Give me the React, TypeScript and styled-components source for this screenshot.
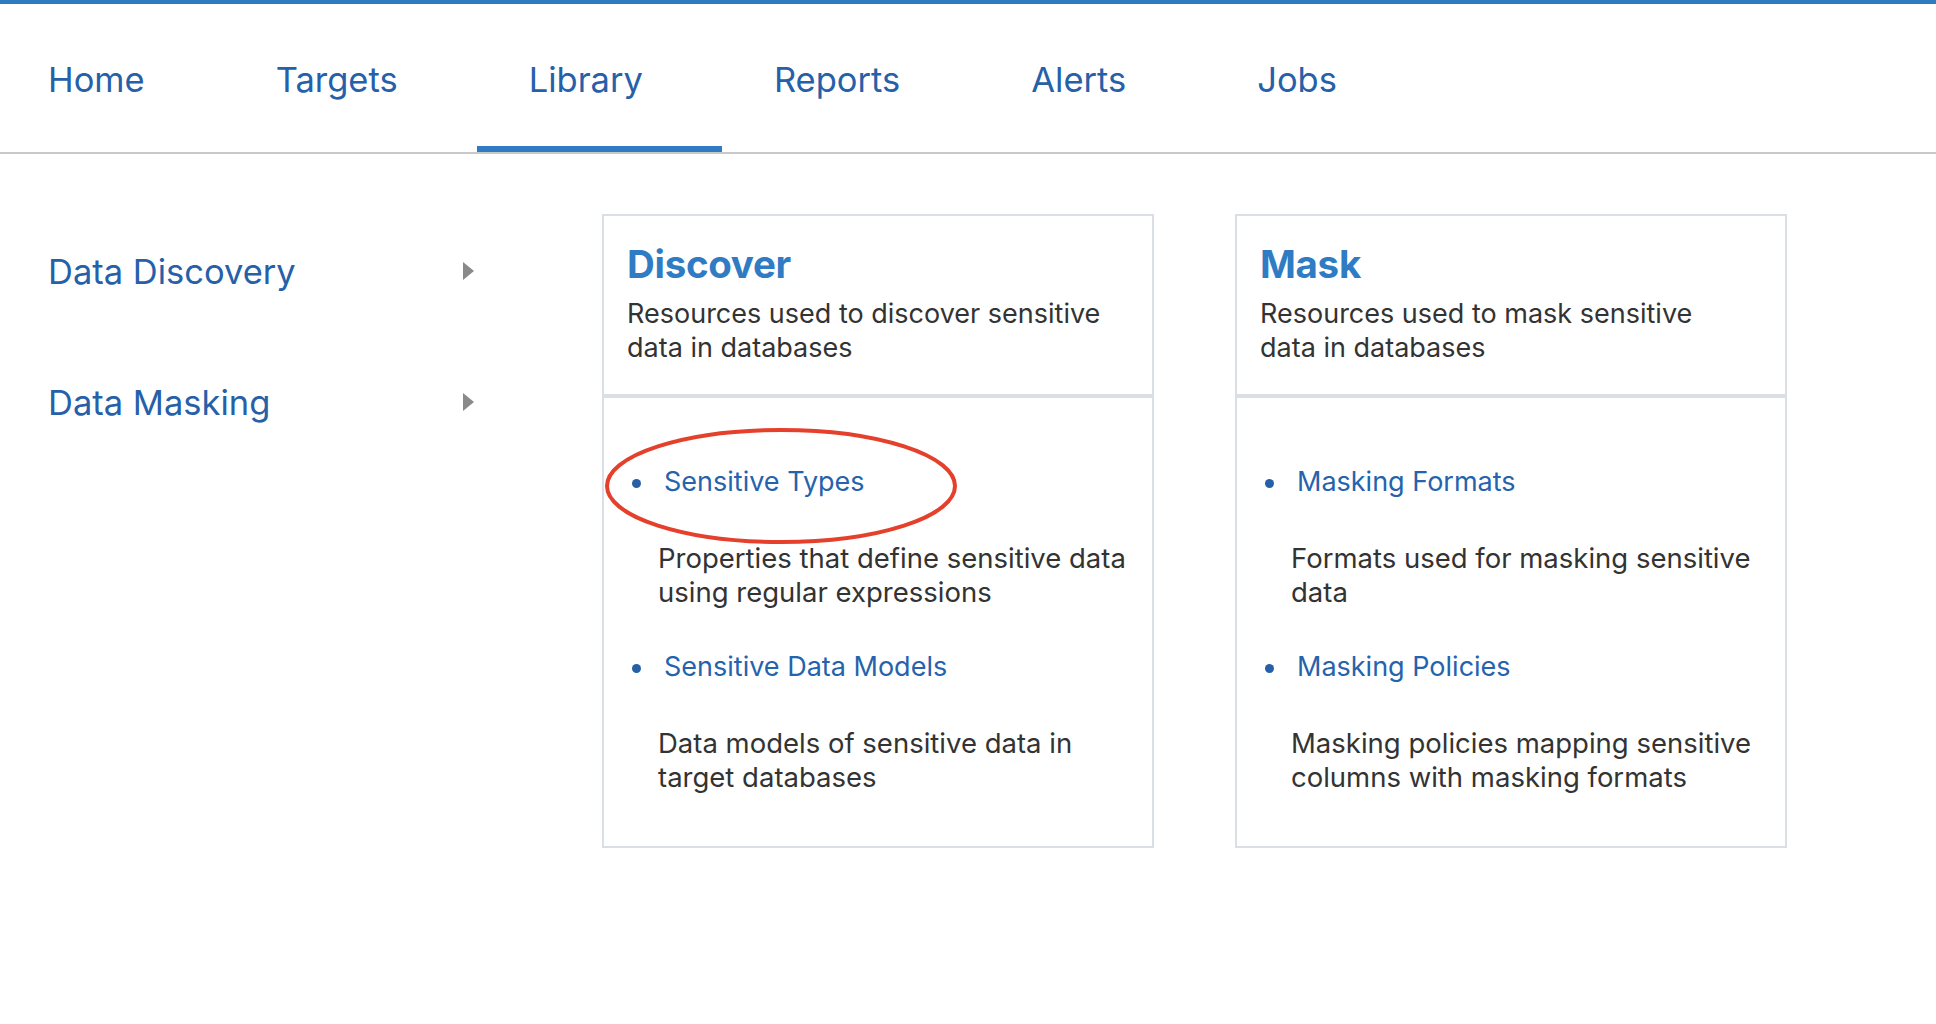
import React from "react";
import styled, { createGlobalStyle } from "styled-components";

const GlobalStyle = createGlobalStyle`
  html, body {
    margin: 0;
    padding: 0;
    background: #ffffff;
  }
  body {
    font-family: Inter, "Liberation Sans", Arial, sans-serif;
    color: #333333;
  }
`;

const Page = styled.div`
  width: 1936px;
  min-height: 1024px;
  background: #ffffff;
  overflow: hidden;
`;

const TopStrip = styled.div`
  height: 4px;
  background: #2f7bc0;
`;

const Nav = styled.nav`
  display: flex;
  height: 148px;
  margin-left: -4px;
  border-bottom: 2px solid #c8c8c8;
`;

const Tab = styled.a<{ $active?: boolean }>`
  display: flex;
  align-items: center;
  box-sizing: border-box;
  padding: 9px 79px 0 52px;
  font-size: 34.5px;
  font-weight: 400;
  color: #2660a9;
  text-decoration: none;
  border-bottom: 6px solid ${(p) => (p.$active ? "#2f7bc4" : "transparent")};
  cursor: pointer;
`;

const Main = styled.div`
  display: flex;
  align-items: flex-start;
`;

const Sidebar = styled.aside`
  display: flex;
  flex-direction: column;
  gap: 87px;
  box-sizing: border-box;
  width: 602px;
  padding: 95px 0 0 48px;
`;

const SideItem = styled.div`
  display: flex;
  align-items: center;
  justify-content: space-between;
  width: 426px;
  height: 44px;
  font-size: 34.5px;
  color: #2660a9;
  cursor: pointer;
`;

const Caret = styled.span`
  width: 0;
  height: 0;
  border-top: 9px solid transparent;
  border-bottom: 9px solid transparent;
  border-left: 11px solid #8a8a8a;
`;

const Cards = styled.div`
  display: flex;
  gap: 81px;
  padding-top: 60px;
`;

const Card = styled.section`
  position: relative;
  width: 552px;
  box-sizing: border-box;
  display: flex;
  flex-direction: column;
`;

const CardHeader = styled.header`
  border: 2px solid #d9dfe5;
  padding: 25px 40px 29px 23px;
`;

const CardTitle = styled.h2`
  margin: 0;
  font-size: 38.5px;
  line-height: 46px;
  font-weight: 700;
  color: #2f7cc4;
  letter-spacing: -0.3px;
`;

const CardDesc = styled.p`
  margin: 10px 0 0;
  font-size: 27px;
  line-height: 34px;
  color: #333333;
`;

const CardBody = styled.div`
  border: 2px solid #d9dfe5;
  padding: 67px 20px 52px 28px;
  display: flex;
  flex-direction: column;
`;

const Entry = styled.div<{ $first?: boolean }>`
  margin-top: ${(p) => (p.$first ? "0" : "41px")};
`;

const LinkRow = styled.div`
  display: flex;
  align-items: center;
  height: 34px;
`;

const Bullet = styled.span`
  width: 9px;
  height: 9px;
  border-radius: 50%;
  background: #2660a9;
  margin-top: 3px;
`;

const ItemLink = styled.a`
  margin-left: 23px;
  font-size: 27px;
  line-height: 34px;
  color: #2563ad;
  text-decoration: none;
  cursor: pointer;
`;

const ItemDesc = styled.p`
  margin: 42px 0 0 26px;
  font-size: 27.5px;
  line-height: 34px;
  color: #333333;
`;

const Highlight = styled.svg`
  position: absolute;
  left: 3px;
  top: 214px;
  width: 352px;
  height: 116px;
  overflow: visible;
  pointer-events: none;
`;

type Item = { title: string; desc: string };

const discoverItems: Item[] = [
  { title: "Sensitive Types", desc: "Properties that define sensitive data using regular expressions" },
  { title: "Sensitive Data Models", desc: "Data models of sensitive data in target databases" },
];

const maskItems: Item[] = [
  { title: "Masking Formats", desc: "Formats used for masking sensitive data" },
  { title: "Masking Policies", desc: "Masking policies mapping sensitive columns with masking formats" },
];

const tabs = ["Home", "Targets", "Library", "Reports", "Alerts", "Jobs"];

function ResourceCard({
  title,
  desc,
  items,
  circled,
}: {
  title: string;
  desc: string;
  items: Item[];
  circled?: boolean;
}) {
  return (
    <Card>
      <CardHeader>
        <CardTitle>{title}</CardTitle>
        <CardDesc>{desc}</CardDesc>
      </CardHeader>
      <CardBody>
        {items.map((it, i) => (
          <Entry key={it.title} $first={i === 0}>
            <LinkRow>
              <Bullet />
              <ItemLink>{it.title}</ItemLink>
            </LinkRow>
            <ItemDesc>{it.desc}</ItemDesc>
          </Entry>
        ))}
      </CardBody>
      {circled && (
        <Highlight viewBox="0 0 352 116">
          <ellipse cx="176" cy="58" rx="174" ry="56" fill="none" stroke="#e5402b" strokeWidth="4" />
        </Highlight>
      )}
    </Card>
  );
}

export default function App() {
  return (
    <Page>
      <GlobalStyle />
      <TopStrip />
      <Nav>
        {tabs.map((t) => (
          <Tab key={t} $active={t === "Library"}>
            {t}
          </Tab>
        ))}
      </Nav>
      <Main>
        <Sidebar>
          <SideItem>
            <span>Data Discovery</span>
            <Caret />
          </SideItem>
          <SideItem>
            <span>Data Masking</span>
            <Caret />
          </SideItem>
        </Sidebar>
        <Cards>
          <ResourceCard
            title="Discover"
            desc="Resources used to discover sensitive data in databases"
            items={discoverItems}
            circled
          />
          <ResourceCard
            title="Mask"
            desc="Resources used to mask sensitive data in databases"
            items={maskItems}
          />
        </Cards>
      </Main>
    </Page>
  );
}
